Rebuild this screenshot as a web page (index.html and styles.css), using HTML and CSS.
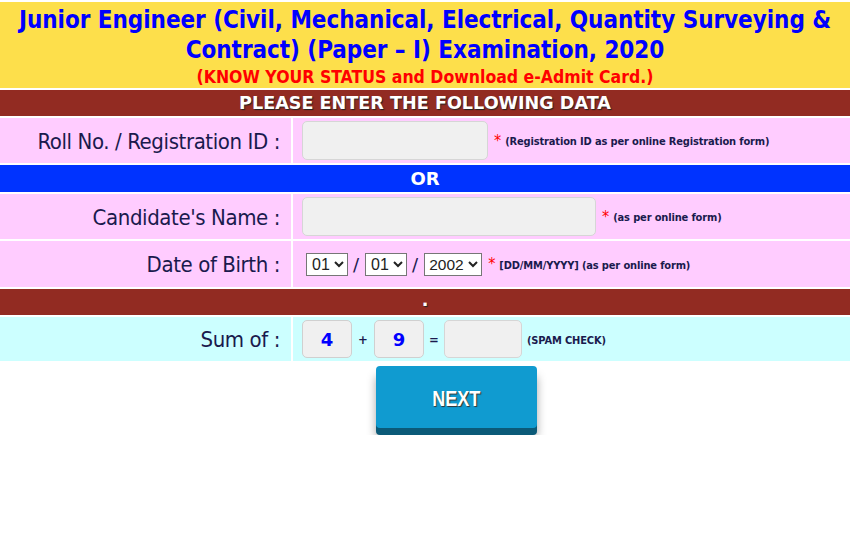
FILE: index.html
```html
<!DOCTYPE html>
<html>
<head>
<meta charset="utf-8">
<link rel="stylesheet" href="styles.css">
</head>
<body>
<div class="page">
  <div class="header">
    <h1 class="title">Junior Engineer (Civil, Mechanical, Electrical, Quantity Surveying &amp;<br>Contract) (Paper – I) Examination, 2020</h1>
    <div class="subtitle">(KNOW YOUR STATUS and Download e-Admit Card.)</div>
  </div>
  <div class="bar bar-brown">PLEASE ENTER THE FOLLOWING DATA</div>
  <div class="row row-pink row-1">
    <div class="label">Roll No. / Registration ID :</div>
    <div class="field">
      <input class="txt txt-roll" type="text">
      <span class="req">*</span>
      <span class="note">(Registration ID as per online Registration form)</span>
    </div>
  </div>
  <div class="bar bar-blue">OR</div>
  <div class="row row-pink row-2">
    <div class="label">Candidate's Name :</div>
    <div class="field">
      <input class="txt txt-name" type="text">
      <span class="req">*</span>
      <span class="note">(as per online form)</span>
    </div>
  </div>
  <div class="row row-pink row-3">
    <div class="label">Date of Birth :</div>
    <div class="field field-dob">
      <select class="sel"><option>01</option></select>
      <span class="slash">/</span>
      <select class="sel"><option>01</option></select>
      <span class="slash">/</span>
      <select class="sel sel-year"><option>2002</option></select>
      <span class="req">*</span>
      <span class="note">[DD/MM/YYYY] (as per online form)</span>
    </div>
  </div>
  <div class="bar bar-brown bar-dot">.</div>
  <div class="row row-cyan row-4">
    <div class="label">Sum of :</div>
    <div class="field field-sum">
      <span class="num">4</span>
      <span class="op op-plus">+</span>
      <span class="num">9</span>
      <span class="op op-eq">=</span>
      <input class="txt txt-ans" type="text">
      <span class="note">(SPAM CHECK)</span>
    </div>
  </div>
  <div class="actions">
    <button class="next" type="button"><span class="next-text">NEXT</span></button>
  </div>
</div>
</body>
</html>
```
FILE: styles.css
```css
* { box-sizing: border-box; }
html, body { margin: 0; padding: 0; background: #fff; }
body { font-family: "DejaVu Sans Condensed", "DejaVu Sans", sans-serif; }

.page {
  width: 850px;
  padding-top: 2px;
  display: flex;
  flex-direction: column;
  gap: 2px;
}

.header {
  background: #fddf4b;
  height: 86px;
  text-align: center;
  padding-top: 3px;
}
.title {
  margin: 0;
  color: #0000ff;
  font-family: "DejaVu Sans Condensed", sans-serif;
  font-weight: bold;
  font-size: 24px;
  line-height: 30px;
  letter-spacing: -0.05px;
}
.subtitle {
  color: #ff0000;
  font-weight: bold;
  font-size: 17.5px;
  line-height: 22px;
  margin-top: 1px;
}

.bar {
  color: #fff;
  font-weight: bold;
  text-align: center;
  font-family: "DejaVu Sans", sans-serif;
  text-shadow: 1px 1px 1px #222;
}
.bar-brown {
  background: #922b22;
  height: 26px;
  font-size: 17.6px;
  line-height: 27px;
}
.bar-blue {
  background: #0033ff;
  height: 27px;
  font-size: 18px;
  line-height: 28px;
  text-shadow: none;
}
.bar-dot { height: 26px; line-height: 22px; }

.row {
  display: grid;
  grid-template-columns: 291px 1fr;
  column-gap: 2px;
  background: #fff;
}
.row-1 { height: 45px; }
.row-2 { height: 45px; }
.row-3 { height: 46px; }
.row-4 { height: 44px; }
.row-pink .label, .row-pink .field { background: #ffccff; }
.row-cyan .label, .row-cyan .field { background: #ccffff; }

.label {
  display: flex;
  align-items: center;
  justify-content: flex-end;
  padding-right: 11px;
  padding-top: 1px;
  font-size: 22px;
  letter-spacing: -0.4px;
  color: #1a1a4d;
}
.field {
  display: flex;
  align-items: center;
  padding-left: 9px;
  color: #1a1a4d;
}

.txt {
  height: 39px;
  border: 1px solid #d6d6d6;
  border-radius: 5px;
  background: #f0f0f0;
  outline: none;
}
.txt-roll { width: 186px; }
.txt-name { width: 294px; }
.txt-ans { width: 78px; height: 38px; }

.req {
  color: #ff0000;
  font-size: 16px;
  margin-left: 6px;
  margin-right: 4px;
  line-height: 1;
}
.note {
  font-size: 11px;
  font-weight: bold;
  letter-spacing: -0.15px;
  font-family: "DejaVu Sans Condensed", sans-serif;
  color: #1a1a4d;
  padding-top: 2px;
}

.field-dob { padding-left: 13px; }
.sel {
  height: 23px;
  font-family: "Liberation Sans", Arial, sans-serif;
  font-size: 16px;
  color: #222;
  background: #fff;
  border: 1px solid #767676;
  border-radius: 0;
  padding: 0 0 0 1px;
  width: 42px;
}
.sel-year { width: 58px; padding-left: 0; font-size: 15.5px; }
.slash {
  font-size: 18px;
  color: #1a1a4d;
  margin: 0 6px 0 5px;
  font-family: "DejaVu Sans", sans-serif;
}

.num {
  width: 50px;
  height: 38px;
  border: 1px solid #d0d0d0;
  border-radius: 5px;
  background: #f0f0f0;
  color: #0000ff;
  font-weight: bold;
  font-size: 18px;
  font-family: "DejaVu Sans", sans-serif;
  display: flex;
  align-items: center;
  justify-content: center;
}
.op {
  text-align: center;
  font-weight: bold;
  font-size: 13px;
  color: #1a1a4d;
}
.op-plus { width: 22px; }
.op-eq { width: 20px; }
.field-sum .note { margin-left: 5px; }

.actions {
  display: flex;
  justify-content: center;
  padding-left: 62px;
  padding-top: 3px;
}
.next {
  width: 161px;
  height: 62px;
  border: none;
  border-radius: 4px;
  background: #109bd0;
  box-shadow: 0 7px 0 #0b5a78, 0 10px 10px rgba(0,0,0,0.35);
  color: #fff;
  font-family: "Liberation Sans", Arial, sans-serif;
  font-weight: bold;
  font-size: 22px;
  text-shadow: 1px 1px 1px #333;
  padding: 3px 0 0 0;
  margin-bottom: 7px;
}
.next-text {
  display: inline-block;
  transform: scaleX(0.82);
}
```
